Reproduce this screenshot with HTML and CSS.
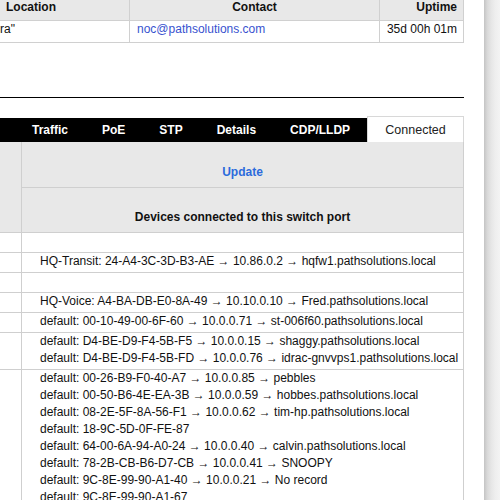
FILE: index.html
```html
<!DOCTYPE html>
<html>
<head>
<meta charset="utf-8">
<title>Switch port</title>
<link rel="stylesheet" href="styles.css">
</head>
<body>
<div class="frame">
  <div class="main">
    <table class="sys">
      <tr>
        <th class="c-loc">Location</th>
        <th class="c-contact">Contact</th>
        <th class="c-uptime">Uptime</th>
      </tr>
      <tr>
        <td class="c-loc v-loc">ra"</td>
        <td class="c-contact"><a class="mail" href="#">noc@pathsolutions.com</a></td>
        <td class="c-uptime">35d 00h 01m</td>
      </tr>
    </table>

    <div class="rule"></div>

    <div class="tabs">
      <span class="tab tab-first">Traffic</span>
      <span class="tab">PoE</span>
      <span class="tab">STP</span>
      <span class="tab">Details</span>
      <span class="tab">CDP/LLDP</span>
      <span class="tab tab-active">Connected</span>
    </div>

    <table class="conn">
      <tr class="gray">
        <td class="side" rowspan="2"></td>
        <td class="head head-1"><a class="update" href="#">Update</a></td>
      </tr>
      <tr class="gray">
        <td class="head head-2">Devices connected to this switch port</td>
      </tr>
      <tr><td class="side"></td><td class="dev">&nbsp;</td></tr>
      <tr><td class="side"></td><td class="dev">HQ-Transit: 24-A4-3C-3D-B3-AE → 10.86.0.2 → hqfw1.pathsolutions.local</td></tr>
      <tr><td class="side"></td><td class="dev">&nbsp;</td></tr>
      <tr><td class="side"></td><td class="dev">HQ-Voice: A4-BA-DB-E0-8A-49 → 10.10.0.10 → Fred.pathsolutions.local</td></tr>
      <tr><td class="side"></td><td class="dev">default: 00-10-49-00-6F-60 → 10.0.0.71 → st-006f60.pathsolutions.local</td></tr>
      <tr><td class="side"></td><td class="dev">default: D4-BE-D9-F4-5B-F5 → 10.0.0.15 → shaggy.pathsolutions.local<br>default: D4-BE-D9-F4-5B-FD → 10.0.0.76 → idrac-gnvvps1.pathsolutions.local</td></tr>
      <tr><td class="side"></td><td class="dev">default: 00-26-B9-F0-40-A7 → 10.0.0.85 → pebbles<br>default: 00-50-B6-4E-EA-3B → 10.0.0.59 → hobbes.pathsolutions.local<br>default: 08-2E-5F-8A-56-F1 → 10.0.0.62 → tim-hp.pathsolutions.local<br>default: 18-9C-5D-0F-FE-87<br>default: 64-00-6A-94-A0-24 → 10.0.0.40 → calvin.pathsolutions.local<br>default: 78-2B-CB-B6-D7-CB → 10.0.0.41 → SNOOPY<br>default: 9C-8E-99-90-A1-40 → 10.0.0.21 → No record<br>default: 9C-8E-99-90-A1-67</td></tr>
    </table>
  </div>
  <div class="gap"></div>
  <div class="edge"></div>
</div>
</body>
</html>
```

FILE: styles.css
```css
html, body {
  margin: 0;
  padding: 0;
  overflow: hidden;
  background: #fff;
}

body {
  font-family: "Liberation Sans", Arial, sans-serif;
  font-size: 12px;
  color: #111;
}

.frame {
  display: flex;
  align-items: stretch;
  min-height: 500px;
}

.main {
  width: 464px;
  flex: none;
  overflow: hidden;
}

.gap {
  width: 20px;
  flex: none;
}

.edge {
  width: 16px;
  flex: none;
  background: linear-gradient(to right, #c4c4c4 0%, #d8d8d8 20%, #e6e6e6 45%, #eeeeee 70%, #f3f3f3 100%);
}

/* system info table */
.sys {
  border-collapse: separate;
  border-spacing: 0;
  table-layout: fixed;
  width: 531px;
  margin-top: -1px;
  margin-left: -67px;
}

.sys th,
.sys td {
  line-height: 17px;
  padding: 0 6px 4px;
  border-bottom: 1px solid #d0d0d0;
  border-right: 1px solid #d0d0d0;
  white-space: nowrap;
  overflow: hidden;
}

.sys th {
  background: #e8e8e8;
  font-weight: bold;
  color: #111;
}

.sys .c-loc { width: 184px; text-align: center; }
.sys .c-contact { width: 237px; text-align: center; }
.sys .c-uptime { width: 71px; text-align: right; }

.sys td.v-loc { text-align: left; padding-left: 67px; }
.sys td.c-contact { text-align: left; padding-left: 7px; }

.mail {
  color: #3852cf;
  text-decoration: none;
}

.rule {
  margin-top: 54px;
  height: 1px;
  background: #000;
}

/* tabs */
.tabs {
  display: flex;
  align-items: flex-end;
  margin-top: 18px;
  height: 26px;
}

.tab {
  background: #000;
  color: #fff;
  font-weight: bold;
  height: 24px;
  line-height: 24px;
  padding: 0 17px;
  white-space: nowrap;
}

.tab-first {
  padding-left: 32px;
}

.tab-active {
  flex: 1;
  text-align: center;
  background: #fff;
  color: #222;
  font-weight: normal;
  font-size: 12.5px;
  height: 24px;
  line-height: 24px;
  padding: 1px 0 0;
  border: 1px solid #d8d8d8;
  border-bottom: 0;
}

/* connected devices table */
.conn {
  border-collapse: separate;
  border-spacing: 0;
  table-layout: fixed;
  width: 464px;
}

.conn td {
  border-bottom: 1px solid #cfcfcf;
  border-right: 1px solid #cfcfcf;
  line-height: 17px;
  vertical-align: top;
  padding: 0;
}

.conn .side {
  width: 21px;
}

.conn tr.gray td {
  background: #e8e8e8;
}

.conn .head {
  text-align: center;
  font-weight: bold;
  color: #111;
}

.conn .head-1 { padding: 22px 0 6px; }
.conn .head-2 { padding: 21px 0 6px; }

.update {
  color: #2c6bdc;
  text-decoration: none;
}

.conn .dev {
  padding: 0 0 2px 18px;
  white-space: nowrap;
  overflow: hidden;
}
```
